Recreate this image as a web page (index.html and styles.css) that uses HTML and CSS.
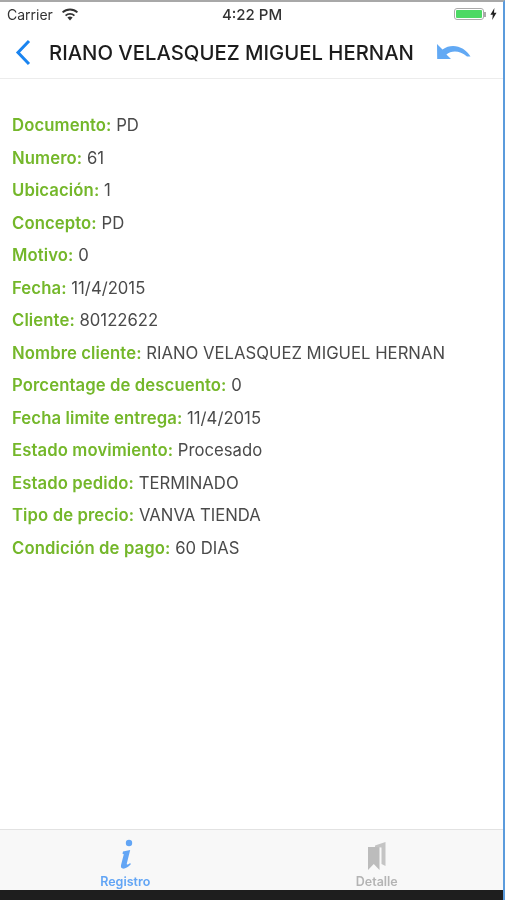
FILE: index.html
```html
<!DOCTYPE html>
<html lang="es">
<head>
  <meta charset="UTF-8" />
  <title>Registro</title>
  <link rel="stylesheet" href="styles.css">
</head>
<body>
  <div class="screen">
    <div class="status-bar">
      <div class="status-left">
        <span>Carrier</span>
        <svg class="wifi" viewBox="0 0 18 13" width="18" height="13">
          <path d="M9 12.6 6.4 9.6a3.8 3.8 0 0 1 5.2 0z" fill="#333"/>
          <path d="M4.6 7.6a6.5 6.5 0 0 1 8.8 0" fill="none" stroke="#333" stroke-width="1.9"/>
          <path d="M1.6 4.4a10.8 10.8 0 0 1 14.8 0" fill="none" stroke="#333" stroke-width="1.9"/>
        </svg>
      </div>
      <div class="status-time">4:22 PM</div>
      <div class="status-right">
        <div class="battery"><div class="battery-fill"></div></div>
        <div class="battery-cap"></div>
        <svg class="bolt" viewBox="0 0 7 12" width="7" height="12">
          <path d="M4.4 0 .4 6.8h2.4L2.2 12l4.3-7.2H4z" fill="#222"/>
        </svg>
      </div>
    </div>

    <div class="nav-bar">
      <svg class="back" viewBox="0 0 16 27" width="16" height="27">
        <path d="M14 2 3 13.500 14 25" fill="none" stroke="#1a84f0" stroke-width="3"/>
      </svg>
      <div class="nav-title">RIANO VELASQUEZ MIGUEL HERNAN</div>
      <svg class="undo" viewBox="0 0 34 16" width="34" height="16">
        <path d="M0 0 .2 15H14L9.400 10.400C14 6.500 22.500 5.800 30 12.400L33.500 12.600C28 3 15.500 -1.500 5.500 5.500z" fill="#62a9f4"/>
      </svg>
    </div>

    <div class="content">
      <p class="row"><b>Documento:</b> PD</p>
      <p class="row"><b>Numero:</b> 61</p>
      <p class="row"><b>Ubicación:</b> 1</p>
      <p class="row"><b>Concepto:</b> PD</p>
      <p class="row"><b>Motivo:</b> 0</p>
      <p class="row"><b>Fecha:</b> 11/4/2015</p>
      <p class="row"><b>Cliente:</b> 80122622</p>
      <p class="row"><b>Nombre cliente:</b> RIANO VELASQUEZ MIGUEL HERNAN</p>
      <p class="row"><b>Porcentage de descuento:</b> 0</p>
      <p class="row"><b>Fecha limite entrega:</b> 11/4/2015</p>
      <p class="row"><b>Estado movimiento:</b> Procesado</p>
      <p class="row"><b>Estado pedido:</b> TERMINADO</p>
      <p class="row"><b>Tipo de precio:</b> VANVA TIENDA</p>
      <p class="row"><b>Condición de pago:</b> 60 DIAS</p>
    </div>

    <div class="tab-bar">
      <div class="tab tab-active">
        <svg class="info-icon" viewBox="0 0 16 32" width="16" height="32">
          <circle cx="10" cy="4" r="3.200" fill="#62a5f5"/>
          <path d="M4 12.500 11.200 11 7.800 24.500c-.3 1.300.6 1.500 3.400-.5l.6 1.300C8.600 28.500 6 30 3.800 29.600 1.800 29.200 1.700 27.500 2.100 25.800L4.800 15.200 3.500 14.800z" fill="#62a5f5"/>
        </svg>
        <span>Registro</span>
      </div>
      <div class="tab">
        <svg viewBox="0 0 18 30" width="18" height="30">
          <path d="M0 6H11.500V29L5.750 23 0 29z" fill="#bcbcbc"/>
          <path d="M7 4.500 17.500 1V25L13.500 23V6.500L7 6z" fill="#c4c4c4"/>
        </svg>
        <span>Detalle</span>
      </div>
    </div>
    <div class="bottom-strip"></div>
  </div>
</body>
</html>
```

FILE: styles.css
```css
body {
  margin: 0;
  font-family: Inter, "Liberation Sans", sans-serif;
  background-color: #fff;
  color: #4a4a4a;
}
.screen {
  display: flex;
  flex-direction: column;
  height: 900px;
  width: 505px;
  box-sizing: border-box;
  border-top: 2px solid #a8a8a8;
  border-right: 2px solid #5b9bdc;
  overflow: hidden;
  filter: blur(0.5px);
}
.status-bar {
  display: flex;
  align-items: center;
  justify-content: space-between;
  height: 24px;
  padding: 0 6px 0 7px;
  font-size: 14px;
  color: #333;
}
.status-left {
  display: flex;
  align-items: center;
  gap: 8px;
  width: 120px;
}
.status-time {
  font-size: 15px;
  font-weight: 500;
}
.status-right {
  display: flex;
  align-items: center;
  justify-content: flex-end;
  width: 120px;
}
.battery {
  width: 30px;
  height: 12px;
  padding: 1px;
  box-sizing: border-box;
  border: 1px solid #aaa;
  border-radius: 3px;
}
.battery-fill {
  height: 100%;
  background-color: #4cd964;
  border-radius: 1px;
}
.battery-cap {
  width: 2px;
  height: 5px;
  background-color: #aaa;
  margin-right: 4px;
}
.nav-bar {
  display: flex;
  align-items: center;
  height: 52px;
  padding: 0 32px 0 15px;
  border-bottom: 1px solid #ececec;
}
.nav-title {
  flex: 1;
  margin-left: 18px;
  font-size: 20.300px;
  font-weight: 500;
  color: #1c1c1c;
  white-space: nowrap;
}
.content {
  flex: 1;
  padding: 30px 12px 0;
}
.row {
  margin: 0;
  height: 32.500px;
  line-height: 32.500px;
  font-size: 16.700px;
  white-space: nowrap;
}
.row b {
  font-weight: 600;
  letter-spacing: 0.1px;
  color: #74b72a;
}
.tab-bar {
  display: flex;
  height: 60px;
  background-color: #f8f8f8;
  border-top: 1px solid #e2e2e2;
}
.tab {
  flex: 1;
  display: flex;
  flex-direction: column;
  align-items: center;
  justify-content: flex-end;
  gap: 3px;
  font-size: 12.500px;
  font-weight: 600;
  color: #b4b4b4;
  padding: 0 1px 1px 0;
}
.tab-active {
  color: #62a5f5;
}
.info-icon {
  margin-left: 4px;
}
.bottom-strip {
  height: 10px;
  background-color: #1e1e1e;
}
```
